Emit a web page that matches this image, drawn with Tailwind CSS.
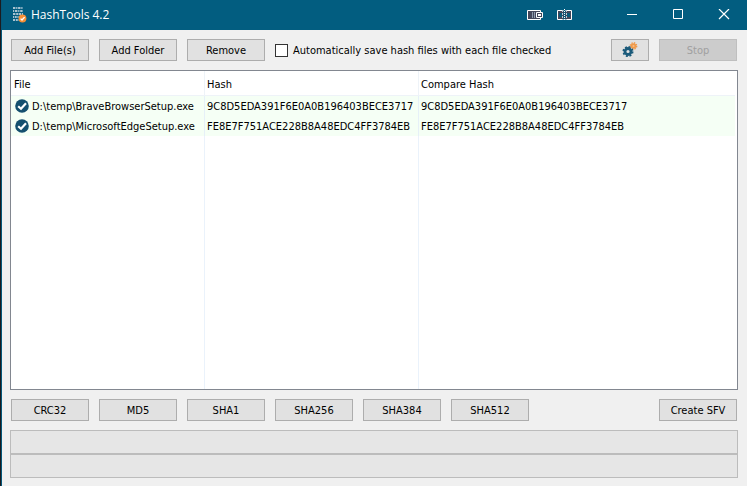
<!DOCTYPE html>
<html lang="en">

<head>
  <meta charset="UTF-8">
  <meta name="viewport" content="width=device-width, initial-scale=1.0">
  <title>HashTools 4.2</title>
  <script src="https://cdn.jsdelivr.net/npm/@tailwindcss/browser@4"></script>
</head>

<body class="bg-[#1b1b1f] pl-px h-screen text-[11px] leading-[17px] text-black font-['DejaVu_Sans_Condensed','Noto_Sans',sans-serif]">
  <div class="h-full flex flex-col bg-[#f0f0f0] border-l border-[#04587a]">

    <!-- Title bar -->
    <header class="h-[30px] shrink-0 bg-[#025d80] text-white flex items-center pl-2.5">
      <svg class="w-4 h-5 mr-[3px]" viewBox="0 0 16 20" fill="none">
        <g stroke="#a9c3d0" stroke-width="2">
          <path d="M1 3h10" stroke-dasharray="2.4 .8 1.2 .7" />
          <path d="M1 6h10" stroke-dasharray="1.2 .8 2.4 .8" />
          <path d="M1 9h10" stroke-dasharray="2.4 .8 2 .6" />
          <path d="M1 12h6" stroke-dasharray="1.2 .7 1.8 .7" />
          <path d="M1 15h6" stroke-dasharray="2 .8" />
        </g>
        <circle cx="10.5" cy="13.5" r="3.9" fill="#f58f36" />
        <path d="M8.6 13.6l1.4 1.4 2.6-2.9" stroke="#fff" stroke-width="1.3" />
      </svg>
      <h1 class="text-xs font-['Open_Sans',sans-serif]">HashTools 4.2</h1>
      <div class="ml-auto flex items-center">
        <button class="w-[30px] h-[30px] flex items-center justify-center" aria-label="Dock">
          <svg class="w-4 h-3" viewBox="0 0 16 12" fill="none">
            <path d="M0 1h14v10H0z" fill="#44475a" />
            <path d="M.5 1.5h13v9H.5z" stroke="#fff" />
            <path d="M5.5 3v6M7.5 3v6" stroke="#8e9cae" />
            <path d="M9.5 3.5h6v5h-6z" fill="#44475a" stroke="#fff" />
            <path d="M11 5h3v2h-3z" fill="#fff" />
          </svg>
        </button>
        <button class="w-[30px] h-[30px] flex items-center justify-center" aria-label="Split">
          <svg class="w-4 h-3" viewBox="0 0 16 12" fill="none">
            <path d="M6.5 1.5h-6v9h6M8.5 1.5h6v9h-6" fill="#44475a" stroke="#fff" />
            <path d="M2 4h3v4H2zM10 4h3v4h-3z" fill="#0a5878" />
            <path d="M7.5 0v12" stroke="#fff" stroke-dasharray="1 1" />
            <path d="M5.5 1v10M9.5 1v10" stroke="#c4ccd4" stroke-dasharray="2 1" />
          </svg>
        </button>
        <button class="w-[46px] h-[30px] ml-[29px] flex items-center justify-center" aria-label="Minimize">
          <svg class="w-3 h-3" viewBox="0 0 12 12" stroke="#fff"><path d="M1 5.5h10" /></svg>
        </button>
        <button class="w-[46px] h-[30px] flex items-center justify-center" aria-label="Maximize">
          <svg class="w-3 h-3" viewBox="0 0 12 12" fill="none" stroke="#fff"><path d="M1.5.5h9v9h-9z" /></svg>
        </button>
        <button class="w-[46px] h-[30px] flex items-center justify-center" aria-label="Close">
          <svg class="w-3 h-3" viewBox="0 0 12 12" stroke="#fff" stroke-width="1.2"><path d="M1 0l10 10M11 0L1 10" /></svg>
        </button>
      </div>
    </header>

    <main class="flex-1 flex flex-col px-2 pr-[9px] pb-2">
      <!-- Toolbar -->
      <div class="flex items-center gap-2.5 py-[9px] px-px">
        <button class="w-[78px] h-[22px] pt-px border border-[#adadad] bg-[#e1e1e1]">Add File(s)</button>
        <button class="w-[78px] h-[22px] pt-px border border-[#adadad] bg-[#e1e1e1]">Add Folder</button>
        <button class="w-[78px] h-[22px] pt-px border border-[#adadad] bg-[#e1e1e1]">Remove</button>
        <label class="flex items-center gap-[5px] whitespace-nowrap">
          <input type="checkbox" class="appearance-none w-[13px] h-[13px] bg-white border border-[#333]">
          Automatically save hash files with each file checked
        </label>
        <button class="ml-auto w-[38px] h-[22px] border border-[#adadad] bg-[#e1e1e1] flex items-center justify-center" aria-label="Options">
          <svg class="w-4 h-4" viewBox="0 0 16 16" fill="none">
            <circle cx="11.5" cy="4" r="2.8" fill="#f09a4b" />
            <circle cx="11.5" cy="4" r="3.2" stroke="#f09a4b" stroke-width="1.4" stroke-dasharray="1.4 1.11" />
            <circle cx="11.5" cy="4" r="1.1" fill="#f7bd85" />
            <circle cx="6" cy="9.5" r="3" stroke="#1b5a7a" stroke-width="2.8" />
            <circle cx="6" cy="9.5" r="4.7" stroke="#1b5a7a" stroke-width="1.6" stroke-dasharray="2 1.69" />
          </svg>
        </button>
        <button class="w-[78px] h-[22px] pt-px border border-[#bfbfbf] bg-[#cccccc] text-[#a0a0a0]" disabled>Stop</button>
      </div>

      <!-- File list -->
      <div class="flex-1 flex flex-col border border-[#828790] bg-white pr-0.5">
        <table class="w-full h-full table-fixed border-separate border-spacing-0 text-left">
          <colgroup>
            <col class="w-[194px]">
            <col class="w-[214px]">
            <col>
          </colgroup>
          <thead>
            <tr class="h-[25px]">
              <th class="font-normal pl-[3px] pt-0.5 border-b border-r border-[#eef3f8]">File</th>
              <th class="font-normal pl-0.5 pt-0.5 border-b border-r border-[#eef3f8]">Hash</th>
              <th class="font-normal pl-0.5 pt-0.5 border-b border-[#eef3f8]">Compare Hash</th>
            </tr>
          </thead>
          <tbody>
            <tr class="h-5 bg-[#f5fff5]">
              <td class="border-r border-[#e6f0f8]">
                <div class="flex items-center gap-[3px] pl-1">
                  <svg class="w-3.5 h-3.5" viewBox="0 0 14 14" fill="none"><circle cx="7" cy="7" r="6.8" fill="#15506f" /><path d="M3.2 7.2l2.8 2.6 5-5.5" stroke="#fff" stroke-width="2.2" /></svg>
                  D:\temp\BraveBrowserSetup.exe
                </div>
              </td>
              <td class="pl-0.5 border-r border-[#e6f0f8]">9C8D5EDA391F6E0A0B196403BECE3717</td>
              <td class="pl-0.5">9C8D5EDA391F6E0A0B196403BECE3717</td>
            </tr>
            <tr class="h-5 bg-[#f5fff5]">
              <td class="border-r border-[#e6f0f8]">
                <div class="flex items-center gap-[3px] pl-1">
                  <svg class="w-3.5 h-3.5" viewBox="0 0 14 14" fill="none"><circle cx="7" cy="7" r="6.8" fill="#15506f" /><path d="M3.2 7.2l2.8 2.6 5-5.5" stroke="#fff" stroke-width="2.2" /></svg>
                  D:\temp\MicrosoftEdgeSetup.exe
                </div>
              </td>
              <td class="pl-0.5 border-r border-[#e6f0f8]">FE8E7F751ACE228B8A48EDC4FF3784EB</td>
              <td class="pl-0.5">FE8E7F751ACE228B8A48EDC4FF3784EB</td>
            </tr>
            <!-- Empty space under the rows -->
            <tr>
              <td class="border-r border-[#eaf2fb]"></td>
              <td class="border-r border-[#eaf2fb]"></td>
              <td></td>
            </tr>
          </tbody>
        </table>
      </div>

      <!-- Hash buttons -->
      <div class="flex items-center gap-2.5 py-[9px] px-px">
        <button class="w-[78px] h-[22px] pt-px border border-[#adadad] bg-[#e1e1e1]">CRC32</button>
        <button class="w-[78px] h-[22px] pt-px border border-[#adadad] bg-[#e1e1e1]">MD5</button>
        <button class="w-[78px] h-[22px] pt-px border border-[#adadad] bg-[#e1e1e1]">SHA1</button>
        <button class="w-[78px] h-[22px] pt-px border border-[#adadad] bg-[#e1e1e1]">SHA256</button>
        <button class="w-[78px] h-[22px] pt-px border border-[#adadad] bg-[#e1e1e1]">SHA384</button>
        <button class="w-[78px] h-[22px] pt-px border border-[#adadad] bg-[#e1e1e1]">SHA512</button>
        <button class="ml-auto w-[78px] h-[22px] pt-px border border-[#adadad] bg-[#e1e1e1]">Create SFV</button>
      </div>

      <!-- Progress -->
      <div class="h-6 border border-[#bcbcbc] bg-[#e6e6e6]" role="progressbar" aria-label="File progress"></div>
      <div class="h-6 border border-[#bcbcbc] bg-[#e6e6e6]" role="progressbar" aria-label="Total progress"></div>
    </main>
  </div>
</body>

</html>
